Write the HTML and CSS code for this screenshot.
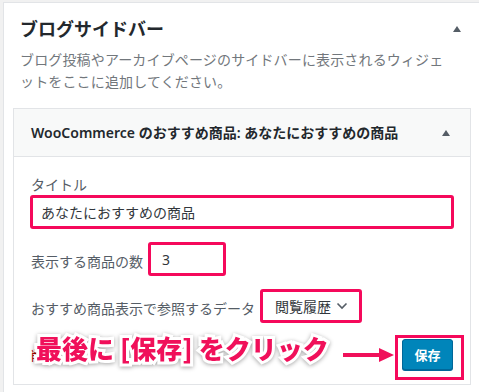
FILE: index.html
```html
<!DOCTYPE html>
<html lang="ja">
<head>
    <meta charset="UTF-8">
    <meta name="viewport" content="width=device-width, initial-scale=1.0">
    <title>ブログサイドバー</title>
    <link rel="stylesheet" href="styles.css">
</head>
<body>
    <div class="sidebar-panel">
        <div class="sidebar-head">
            <h2 class="sidebar-title">ブログサイドバー</h2>
            <span class="toggle-arrow"></span>
        </div>
        <p class="sidebar-desc">ブログ投稿やアーカイブページのサイドバーに表示されるウィジェットをここに追加してください。</p>

        <div class="widget">
            <div class="widget-top">
                <h3 class="widget-title">WooCommerce のおすすめ商品: あなたにおすすめの商品</h3>
                <span class="toggle-arrow"></span>
            </div>

            <div class="widget-inside">
                <div class="field">
                    <label for="title-input">タイトル</label>
                    <input type="text" id="title-input" class="text-input marked" value="あなたにおすすめの商品">
                </div>

                <div class="field field-inline">
                    <label for="number-input">表示する商品の数</label>
                    <input type="text" id="number-input" class="number-input marked" value="3">
                </div>

                <div class="field field-inline">
                    <label for="source-select">おすすめ商品表示で参照するデータ</label>
                    <div class="select-box marked" id="source-select">
                        <span>閲覧履歴</span>
                        <svg width="12" height="8" viewBox="0 0 12 8"><path d="M1.5 1.5 L6 6 L10.5 1.5" fill="none" stroke="#555d66" stroke-width="1.6"/></svg>
                    </div>
                </div>

                <div class="widget-footer">
                    <a class="delete-link" href="#">削除</a>
                    <div class="callout">
                        <span class="callout-text">最後に [保存] をクリック</span>
                        <svg class="callout-arrow" width="52" height="16" viewBox="0 0 52 16"><path d="M0 8 H38" stroke="#f0105a" stroke-width="4"/><path d="M36 1 L51 8 L36 15 Z" fill="#f0105a"/></svg>
                    </div>
                    <button class="save-button">保存</button>
                </div>
            </div>
        </div>
    </div>
</body>
</html>
```

FILE: styles.css
```css
html, body {
    margin: 0;
    height: 392px;
    overflow: hidden;
}

body {
    background-color: #f1f1f1;
    font-family: "Noto Sans", "Noto Sans CJK JP", sans-serif;
}

.sidebar-panel {
    margin: 2px 0 0 3px;
    width: 490px;
    height: 390px;
    box-sizing: border-box;
    background-color: #fff;
    border: 1px solid #e2e4e7;
    border-bottom: none;
    padding: 14px 0 0 9px;
}

.sidebar-head {
    width: 468px;
    box-sizing: border-box;
    padding: 0 20px 0 7px;
    display: flex;
    align-items: center;
    justify-content: space-between;
}

.sidebar-title {
    margin: 0;
    font-size: 18px;
    line-height: 24px;
    font-weight: 700;
    color: #23282d;
}

.toggle-arrow {
    width: 0;
    height: 0;
    border-left: 4px solid transparent;
    border-right: 4px solid transparent;
    border-bottom: 6px solid #555d66;
}

.sidebar-desc {
    margin: 8px 0 0 7px;
    width: 428px;
    font-size: 14px;
    line-height: 22px;
    letter-spacing: 0.15px;
    color: #72777c;
}

.widget {
    margin-top: 15px;
    width: 458px;
    box-sizing: border-box;
    border: 1px solid #e2e4e7;
    background-color: #fff;
}

.widget-top {
    height: 48px;
    box-sizing: border-box;
    padding: 0 20px 0 17px;
    background-color: #f8f9f9;
    border-bottom: 1px solid #e2e4e7;
    display: flex;
    align-items: center;
    justify-content: space-between;
}

.widget-title {
    margin: 0;
    font-size: 14px;
    line-height: 20px;
    font-weight: 600;
    color: #23282d;
}

.widget-inside {
    padding: 18px 17px 14px 17px;
    font-size: 14px;
    color: #555d66;
}

.field label {
    display: block;
    line-height: 20px;
}

.field + .field {
    margin-top: 15px;
}

.field-inline {
    display: flex;
    align-items: center;
    gap: 6px;
}

.field-inline label {
    padding-top: 6px;
}

.text-input,
.number-input,
.select-box {
    height: 32px;
    box-sizing: border-box;
    border: 1px solid #8d96a0;
    border-radius: 2px;
    background-color: #fff;
    font-family: inherit;
    font-size: 14px;
    color: #32373c;
    padding: 0 8px;
}

.text-input {
    margin-top: 1px;
    width: 100%;
    padding-left: 9px;
}

.number-input {
    width: 76px;
    padding-left: 12px;
}

.marked {
    outline: 3px solid #f5095b;
    outline-offset: -2px;
}

.select-box {
    width: 100px;
    display: flex;
    align-items: center;
    justify-content: space-between;
    padding: 0 12px 0 13px;
}

.widget-footer {
    margin-top: 17px;
    position: relative;
    display: flex;
    align-items: center;
    justify-content: space-between;
}

.delete-link {
    color: #a00;
    font-size: 13px;
    text-decoration: none;
}

.save-button {
    position: relative;
    width: 51px;
    height: 31px;
    border: 1px solid #006799;
    border-radius: 3px;
    background-color: #0085ba;
    color: #fff;
    font-family: inherit;
    font-size: 13px;
    font-weight: 600;
    box-shadow: 0 1px 0 #006799;
}

/* annotation box drawn round the save button */
.save-button::after {
    content: "";
    position: absolute;
    top: -5px;
    left: -8px;
    right: -12px;
    bottom: -11px;
    border: 3px solid #f5095b;
}

.callout {
    position: absolute;
    left: 5px;
    top: -9px;
    display: flex;
    align-items: center;
    gap: 14px;
}

.callout-text {
    font-family: "Noto Sans CJK JP", sans-serif;
    font-size: 26px;
    line-height: 36px;
    font-weight: 900;
    color: #f0105a;
    -webkit-text-stroke: 6px #fff;
    paint-order: stroke fill;
    filter: drop-shadow(0 1px 2px rgba(0,0,0,0.35));
}

.callout-arrow {
    margin-top: 14px;
}
```
